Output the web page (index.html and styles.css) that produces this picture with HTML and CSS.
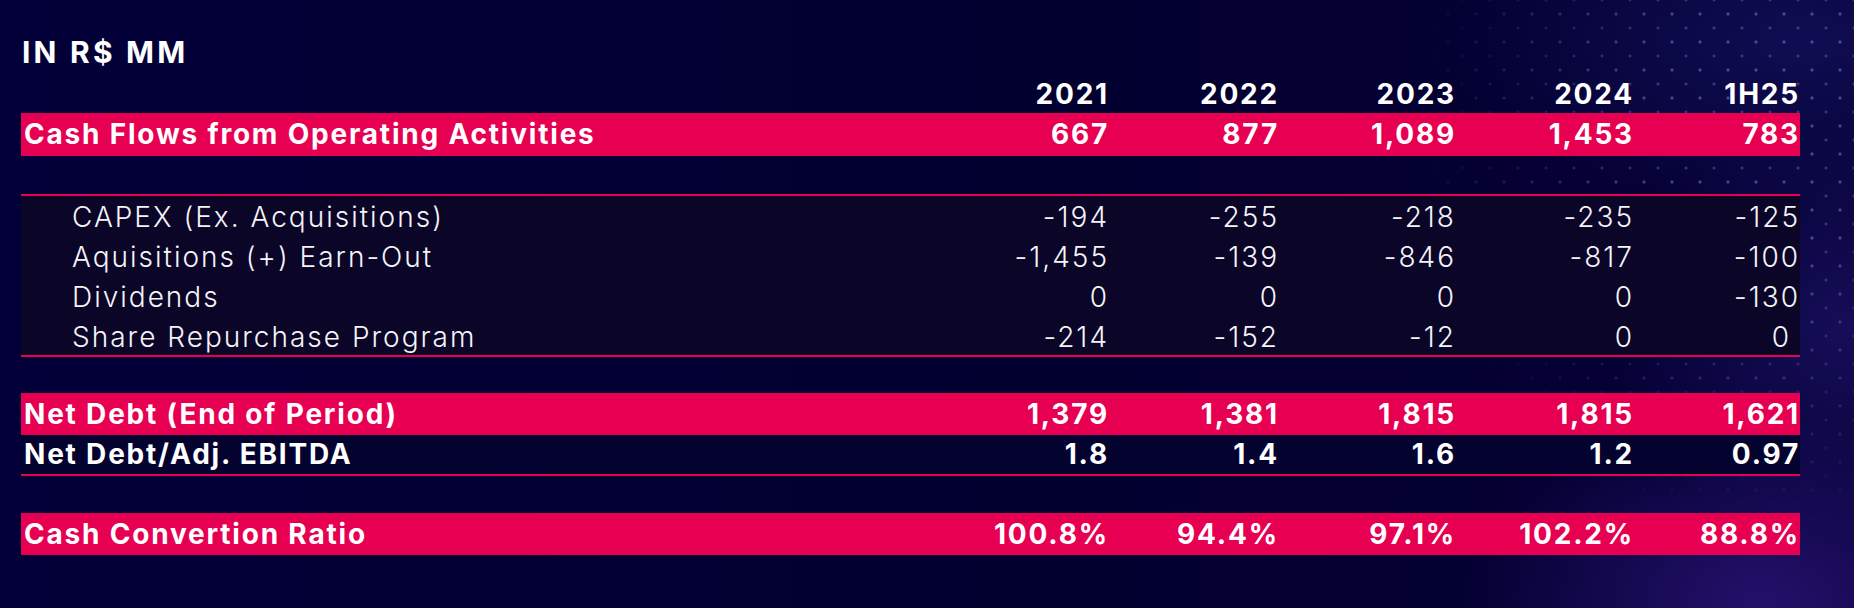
FILE: index.html
```html
<!DOCTYPE html>
<html lang="en">
<head>
<meta charset="utf-8">
<title>Cash Flow</title>
<link rel="stylesheet" href="styles.css">
</head>
<body>
<div class="decor"></div>
<main class="page">
  <h1 class="title">IN R$ MM</h1>
  <div class="table">
    <div class="row head">
      <div class="label"></div>
      <div class="num">2021</div><div class="num">2022</div><div class="num">2023</div><div class="num">2024</div><div class="num">1H25</div>
    </div>
    <div class="row bar first">
      <div class="label">Cash Flows from Operating Activities</div>
      <div class="num">667</div><div class="num">877</div><div class="num">1,089</div><div class="num">1,453</div><div class="num">783</div>
    </div>
    <div class="detail">
      <div class="row light">
        <div class="label sub">CAPEX (Ex. Acquisitions)</div>
        <div class="num">-194</div><div class="num">-255</div><div class="num">-218</div><div class="num">-235</div><div class="num">-125</div>
      </div>
      <div class="row light">
        <div class="label sub">Aquisitions (+) Earn-Out</div>
        <div class="num">-1,455</div><div class="num">-139</div><div class="num">-846</div><div class="num">-817</div><div class="num">-100</div>
      </div>
      <div class="row light">
        <div class="label sub">Dividends</div>
        <div class="num">0</div><div class="num">0</div><div class="num">0</div><div class="num">0</div><div class="num">-130</div>
      </div>
      <div class="row light">
        <div class="label sub">Share Repurchase Program</div>
        <div class="num">-214</div><div class="num">-152</div><div class="num">-12</div><div class="num">0</div><div class="num trail">0</div>
      </div>
    </div>
    <div class="row bar second">
      <div class="label">Net Debt (End of Period)</div>
      <div class="num">1,379</div><div class="num">1,381</div><div class="num">1,815</div><div class="num">1,815</div><div class="num">1,621</div>
    </div>
    <div class="row ratio">
      <div class="label">Net Debt/Adj. EBITDA</div>
      <div class="num">1.8</div><div class="num">1.4</div><div class="num">1.6</div><div class="num">1.2</div><div class="num">0.97</div>
    </div>
    <div class="row bar third">
      <div class="label">Cash Convertion Ratio</div>
      <div class="num">100.8%</div><div class="num">94.4%</div><div class="num">97.1%</div><div class="num">102.2%</div><div class="num">88.8%</div>
    </div>
  </div>
</main>
</body>
</html>
```
FILE: styles.css
```css
html, body {
  margin: 0;
  padding: 0;
}

body {
  width: 1854px;
  height: 608px;
  overflow: hidden;
  position: relative;
  font-family: Inter, "Open Sans", "Liberation Sans", sans-serif;
  color: #ffffff;
  background:
    radial-gradient(ellipse 420px 260px at 1760px 600px, rgba(60, 30, 150, 0.55), rgba(60, 30, 150, 0) 70%),
    radial-gradient(ellipse 360px 300px at 1854px 330px, rgba(40, 30, 130, 0.45), rgba(40, 30, 130, 0) 70%),
    radial-gradient(ellipse 500px 260px at 1800px 40px, rgba(25, 25, 110, 0.5), rgba(25, 25, 110, 0) 70%),
    linear-gradient(90deg, #030039 0%, #02002f 55%, #060136 100%);
}

.decor {
  position: absolute;
  top: 0;
  right: 0;
  width: 420px;
  height: 608px;
  background-image:
    radial-gradient(circle, rgba(130, 150, 240, 0.45) 0 1.3px, transparent 1.9px),
    radial-gradient(circle, rgba(130, 150, 240, 0.35) 0 1.2px, transparent 1.8px);
  background-size: 28px 28px, 28px 28px;
  background-position: 0 0, 14px 14px;
  -webkit-mask-image: radial-gradient(ellipse 360px 420px at 330px 120px, #000 30%, transparent 100%);
  mask-image: radial-gradient(ellipse 360px 420px at 330px 120px, #000 30%, transparent 100%);
  pointer-events: none;
}

.page {
  position: relative;
  padding: 37px 0 0 21px;
}

.title {
  margin: 0;
  height: 30px;
  line-height: 30px;
  font-size: 30px;
  font-weight: 700;
  padding-left: 1px;
  letter-spacing: 3.2px;
}

.table {
  width: 1779px;
  margin-top: 8px;
  font-size: 28px;
  letter-spacing: 1.8px;
}

.row {
  display: grid;
  grid-template-columns: 918px 170px 170px 177px 178px 166px;
  align-items: center;
}

.row > div {
  white-space: pre;
}

.label {
  padding-left: 3px;
}

.label.sub {
  padding-left: 51px;
}

.num {
  text-align: right;
  padding-right: 0;
}

.head {
  height: 38px;
  line-height: 38px;
  font-weight: 700;
}

.bar {
  background: #e70052;
  font-weight: 700;
}

.first {
  height: 43px;
  line-height: 43px;
}

.second {
  height: 42px;
  line-height: 42px;
  margin-top: 36px;
}

.third {
  height: 42px;
  line-height: 42px;
  margin-top: 37px;
}

.detail {
  margin-top: 38px;
  height: 159px;
  border-top: 2px solid #e70052;
  border-bottom: 2px solid #e70052;
  background: #0b0528;
}

.light {
  height: 40px;
  line-height: 40px;
  font-weight: 300;
  color: #f4f4f8;
  letter-spacing: 2px;
}

.light:first-child {
  margin-top: 1px;
}

.trail {
  padding-right: 9px;
}

.ratio {
  height: 39px;
  line-height: 39px;
  font-weight: 700;
  border-bottom: 2px solid #e70052;
  background: #04022f;
}
```
